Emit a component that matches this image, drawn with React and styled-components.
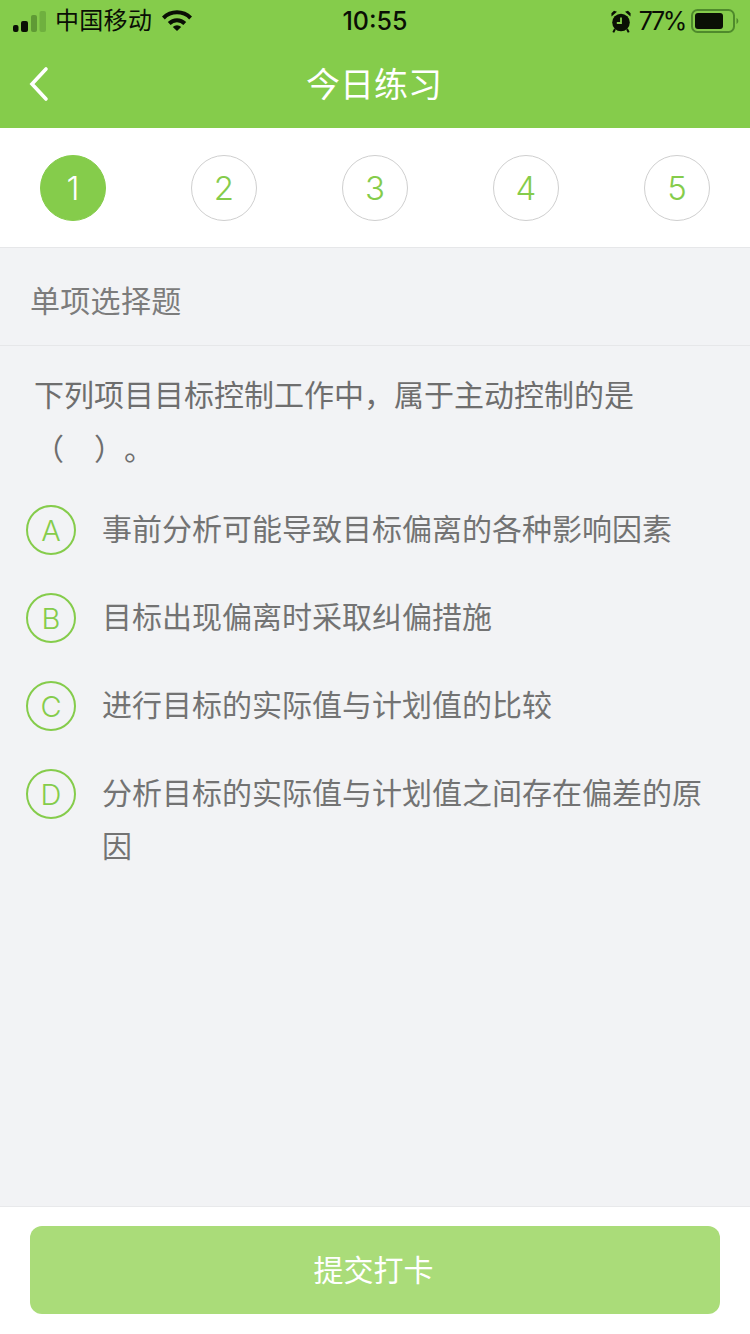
import React from "react";
import styled, { createGlobalStyle } from "styled-components";

const Global = createGlobalStyle`
  html, body { margin: 0; padding: 0; background: #f2f3f5; }
  * { box-sizing: border-box; }
  body { font-family: "Liberation Sans", "Noto Sans CJK SC", sans-serif; }
`;
const Page = styled.div`
  width: 750px; height: 1334px; display: flex; flex-direction: column; overflow: hidden; background: #f2f3f5;
`;
const Header = styled.header`background: #85cc4b; height: 128px; flex: none;`;
const StatusBar = styled.div`
  height: 40px; display: grid; grid-template-columns: 1fr auto 1fr; align-items: center; padding: 1px 11px 0 13px; color: #0a0f05;
`;
const StatusLeft = styled.div`display: flex; align-items: center;`;
const Carrier = styled.span`font-size: 24px; letter-spacing: 0.3px; line-height: 40px; margin-left: 8px;`;
const Time = styled.span`font-family: "Inter", sans-serif; font-size: 25px; font-weight: 500; line-height: 40px; margin-left: -2px;`;
const StatusRight = styled.div`display: flex; align-items: center; justify-content: flex-end;`;
const Percent = styled.span`font-family: "Inter", sans-serif; font-size: 25px; letter-spacing: -2.4px; line-height: 40px; margin: 0 6px 0 8px;`;
const NavBar = styled.div`height: 88px; position: relative; display: flex; align-items: center; justify-content: center;`;
const Back = styled.svg`position: absolute; left: 28px; top: 26px;`;
const Title = styled.h1`margin: 0 2px 0 0; color: #fff; font-size: 34px; font-weight: 400; line-height: 88px; position: relative; top: 1px;`;
const Steps = styled.nav`
  height: 120px; flex: none; background: #fff; border-bottom: 1px solid #e6e7e9;
  display: flex; justify-content: space-between; align-items: center; padding: 1px 40px 0;
`;
const Step = styled.div`
  width: 66px; height: 66px; border-radius: 50%; display: flex; align-items: center; justify-content: center;
  font-family: "Inter", "Liberation Sans", sans-serif; font-size: 33px; font-weight: 350;
  color: ${p => (p.$active ? "#fff" : "#85cc4b")};
  background: ${p => (p.$active ? "#85cc4b" : "#fff")};
  border: 1px solid ${p => (p.$active ? "#85cc4b" : "#cfcfcf")};
`;
const Section = styled.div`
  height: 98px; flex: none; display: flex; align-items: center; padding: 4px 30px 0; border-bottom: 1px solid #e6e7e9;
  color: #7c7c7c; font-size: 30px; letter-spacing: 0.3px;
`;
const Body = styled.main`flex: 1; padding: 23px 0 0;`;
const Question = styled.p`
  margin: 0 0 26px; padding: 0 110px 0 34px; color: #6e6e6e; font-size: 30px; line-height: 54px;
  text-spacing-trim: space-all;
`;
const Options = styled.div`display: flex; flex-direction: column; padding: 0 26px;`;
const Option = styled.div`display: flex; align-items: flex-start; margin-bottom: 35px;`;
const Letter = styled.span`
  width: 50px; height: 50px; flex: none; border-radius: 50%; border: 2px solid #85cc4b; color: #85cc4b;
  display: flex; align-items: center; justify-content: center; font-size: 29px; font-family: "Inter", sans-serif; font-weight: 350;
  margin: 2px 26px 0 0;
`;
const OptionText = styled.span`color: #737373; font-size: 30px; line-height: 53px; width: 605px;`;
const Footer = styled.footer`
  height: 128px; flex: none; background: #fff; border-top: 1px solid #e8e9eb; padding: 19px 30px 0;
`;
const Submit = styled.button`
  width: 690px; height: 88px; border: 0; border-radius: 12px; background: #aadc79; color: #fff;
  font-family: inherit; font-size: 30px; padding: 0 3px 4px 0;
`;

const Signal = () => (
  <svg width="34" height="24" viewBox="0 0 34 24">
    <rect x="0" y="16" width="5.5" height="7" rx="2" fill="#0a0f05" />
    <rect x="8" y="12" width="7" height="11" rx="2" fill="#0a0f05" />
    <rect x="18" y="6" width="6" height="17" rx="2" fill="#5f9a35" />
    <rect x="26.5" y="2" width="6.5" height="21" rx="2" fill="#6fb03f" />
  </svg>
);
const Wifi = () => (
  <svg width="30" height="22" viewBox="0 0 30 22" style={{ marginLeft: 10, marginTop: -3 }}>
    <path d="M0 7.5a21 21 0 0 1 30 0l-2.8 2.9a17 17 0 0 0-24.4 0Z" fill="#0a0f05" />
    <path d="M5.8 13a13 13 0 0 1 18.4 0L21.4 16a9 9 0 0 0-12.8 0Z" fill="#0a0f05" />
    <path d="M10.8 18a6 6 0 0 1 8.4 0L15 22Z" fill="#0a0f05" />
  </svg>
);
const Alarm = () => (
  <svg width="20" height="23" viewBox="0 0 20 23">
    <circle cx="10" cy="12.5" r="8.8" fill="#0a0f05" />
    <path d="M10 7.5v5.5H5.8" stroke="#85cc4b" strokeWidth="1.8" fill="none" />
    <path d="M0.5 6.5 6 1.8 3 .8.4 3.2ZM19.5 6.5 14 1.8 17 .8l2.6 2.4Z" fill="#0a0f05" />
    <path d="M4 19 2.3 22.4M16 19l1.7 3.4" stroke="#0a0f05" strokeWidth="2" />
  </svg>
);
const Battery = () => (
  <svg width="48" height="24" viewBox="0 0 48 24">
    <rect x="1" y="1" width="42" height="22" rx="5.5" fill="none" stroke="#4f8a2c" strokeWidth="2" />
    <rect x="4" y="4" width="28" height="16" rx="3" fill="#0a0f05" />
    <path d="M45.5 9v6c1-.4 1.8-1.6 1.8-3s-.8-2.6-1.8-3Z" fill="#4f8a2c" />
  </svg>
);

const options = [
  ["A", "事前分析可能导致目标偏离的各种影响因素"],
  ["B", "目标出现偏离时采取纠偏措施"],
  ["C", "进行目标的实际值与计划值的比较"],
  ["D", "分析目标的实际值与计划值之间存在偏差的原因"],
];

export default function App() {
  return (
    <Page>
      <Global />
      <Header>
        <StatusBar>
          <StatusLeft>
            <Signal />
            <Carrier>中国移动</Carrier>
            <Wifi />
          </StatusLeft>
          <Time>10:55</Time>
          <StatusRight>
            <Alarm />
            <Percent>77%</Percent>
            <Battery />
          </StatusRight>
        </StatusBar>
        <NavBar>
          <Back width="22" height="36" viewBox="0 0 22 36">
            <path d="M18 3 4 18l14 15" fill="none" stroke="#fff" strokeWidth="3.6" strokeLinecap="round" strokeLinejoin="miter" />
          </Back>
          <Title>今日练习</Title>
        </NavBar>
      </Header>
      <Steps>
        {[1, 2, 3, 4, 5].map(n => (
          <Step key={n} $active={n === 1}>{n}</Step>
        ))}
      </Steps>
      <Section>单项选择题</Section>
      <Body>
        <Question>下列项目目标控制工作中，属于主动控制的是（　）。</Question>
        <Options>
          {options.map(([letter, text]) => (
            <Option key={letter}>
              <Letter>{letter}</Letter>
              <OptionText>{text}</OptionText>
            </Option>
          ))}
        </Options>
      </Body>
      <Footer>
        <Submit>提交打卡</Submit>
      </Footer>
    </Page>
  );
}
